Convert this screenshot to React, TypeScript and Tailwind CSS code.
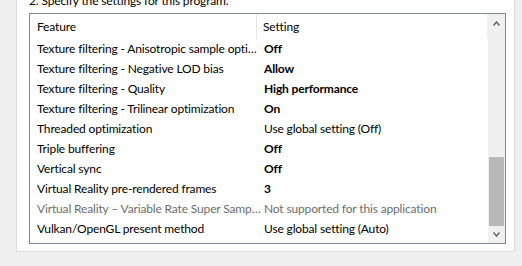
const rows: { feature: string; setting: string; bold?: boolean; disabled?: boolean }[] = [
  { feature: "Texture filtering - Anisotropic sample opti…", setting: "Off", bold: true },
  { feature: "Texture filtering - Negative LOD bias", setting: "Allow", bold: true },
  { feature: "Texture filtering - Quality", setting: "High performance", bold: true },
  { feature: "Texture filtering - Trilinear optimization", setting: "On", bold: true },
  { feature: "Threaded optimization", setting: "Use global setting (Off)" },
  { feature: "Triple buffering", setting: "Off", bold: true },
  { feature: "Vertical sync", setting: "Off", bold: true },
  { feature: "Virtual Reality pre-rendered frames", setting: "3", bold: true },
  {
    feature: "Virtual Reality – Variable Rate Super Samp…",
    setting: "Not supported for this application",
    disabled: true,
  },
  { feature: "Vulkan/OpenGL present method", setting: "Use global setting (Auto)" },
];

const Chevron = ({ down }: { down?: boolean }) => (
  <svg width="7" height="5" viewBox="0 0 7 5" className={down ? "rotate-180" : ""}>
    <path d="M0.5 4.5 L3.5 1 L6.5 4.5" fill="none" stroke="#606060" strokeWidth="1.4" />
  </svg>
);

const App = () => {
  return (
    <div className="w-[522px] h-[266px] overflow-hidden bg-[#f0f0f0] pl-4 font-['Lato',sans-serif] text-[12px] tracking-[-0.15px] text-black">
      {/* Settings panel */}
      <div className="w-[499px] h-[259px] bg-white border-x border-b border-[#dcdcdc] pl-3">
        <p className="-mt-[7px] h-4 leading-4 whitespace-nowrap">2. Specify the settings for this program.</p>

        {/* List box */}
        <div className="mt-1 w-[477px] h-[231px] border border-[#828790] flex">
          <div className="flex-1 flex flex-col">
            <div className="h-[25px] flex items-center">
              <div className="w-[227px] h-full pl-[7px] flex items-center border-r border-[#e5e5e5]">Feature</div>
              <div className="flex-1 h-full pl-[6px] flex items-center border-r border-[#f2f2f2]">Setting</div>
            </div>
            {rows.map((r) => (
              <div key={r.feature} className={`h-5 flex items-center ${r.disabled ? "text-[#6d6d6d]" : ""}`}>
                <div className="w-[228px] pl-[7px] whitespace-nowrap">{r.feature}</div>
                <div className={`flex-1 pl-[6px] whitespace-nowrap ${r.bold ? "font-bold" : ""}`}>{r.setting}</div>
              </div>
            ))}
          </div>

          {/* Scrollbar */}
          <div className="w-[17px] h-full bg-[#f0f0f0] flex flex-col">
            <div className="h-[17px] flex items-center justify-center pt-[2px]">
              <Chevron />
            </div>
            <div className="flex-1" />
            <div className="h-[69px] bg-[#b9b9b9] mx-[1px]" />
            <div className="h-[17px] flex items-center justify-center">
              <Chevron down />
            </div>
          </div>
        </div>
      </div>
    </div>
  );
};

export default App;
